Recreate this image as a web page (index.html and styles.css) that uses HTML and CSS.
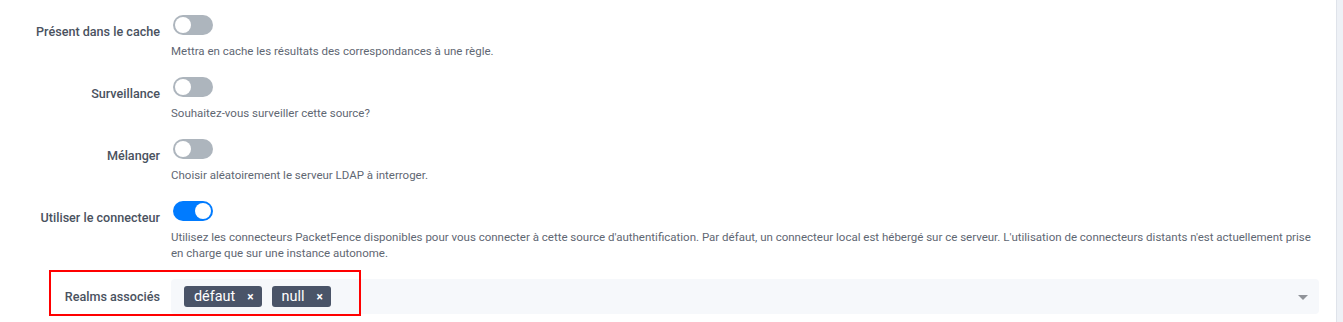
FILE: index.html
```html
<!DOCTYPE html>
<html lang="fr">
<head>
<meta charset="utf-8">
<title>Source</title>
<link rel="stylesheet" href="styles.css">
</head>
<body>
<div class="page">
  <main class="form">
    <div class="row">
      <label class="label">Présent dans le cache</label>
      <div class="control">
        <span class="switch"><span class="knob"></span></span>
        <div class="help">Mettra en cache les résultats des correspondances à une règle.</div>
      </div>
    </div>
    <div class="row">
      <label class="label">Surveillance</label>
      <div class="control">
        <span class="switch"><span class="knob"></span></span>
        <div class="help">Souhaitez-vous surveiller cette source?</div>
      </div>
    </div>
    <div class="row">
      <label class="label">Mélanger</label>
      <div class="control">
        <span class="switch"><span class="knob"></span></span>
        <div class="help">Choisir aléatoirement le serveur LDAP à interroger.</div>
      </div>
    </div>
    <div class="row">
      <label class="label">Utiliser le connecteur</label>
      <div class="control">
        <span class="switch on"><span class="knob"></span></span>
        <div class="help">Utilisez les connecteurs PacketFence disponibles pour vous connecter à cette source d'authentification. Par défaut, un connecteur local est hébergé sur ce serveur. L'utilisation de connecteurs distants n'est actuellement prise en charge que sur une instance autonome.</div>
      </div>
    </div>
    <div class="row realms">
      <label class="label label-mid">Realms associés</label>
      <div class="select">
        <div class="tags">
          <span class="tag">défaut<span class="x">×</span></span>
          <span class="tag">null<span class="x">×</span></span>
        </div>
        <span class="caret"></span>
      </div>
      <span class="highlight"></span>
    </div>
  </main>
  <aside class="side"></aside>
</div>
</body>
</html>
```
FILE: styles.css
```css
html, body {
  margin: 0;
  padding: 0;
  background: #fff;
}
body {
  font-family: Roboto, "Liberation Sans", sans-serif;
  color: #495057;
}
.page {
  display: flex;
  height: 322px;
  overflow: hidden;
}
.form {
  flex: 1;
  padding: 15px 17px 0 0;
}
.side {
  width: 6px;
  border-left: 1px solid #dfe3ea;
  background: #eef1f6;
}
.row {
  display: grid;
  grid-template-columns: 171px 1fr;
  margin-bottom: 18px;
  position: relative;
}
.label {
  text-align: right;
  padding: 9px 11px 0 0;
  font-size: 12.6px;
  line-height: 16px;
  font-weight: 500;
  color: #4a5260;
}
.control {
  padding-left: 2px;
}
.switch {
  display: flex;
  align-items: center;
  width: 40px;
  height: 20px;
  border-radius: 10px;
  background: #adb5bd;
  box-sizing: border-box;
  padding: 0 2px;
}
.switch .knob {
  width: 16px;
  height: 16px;
  border-radius: 50%;
  background: #fff;
}
.switch.on {
  background: #007bff;
  justify-content: flex-end;
}
.help {
  margin-top: 8px;
  margin-left: -2px;
  font-size: 11.5px;
  line-height: 16px;
  color: #5f6773;
}
.label-mid {
  padding-top: 0;
  align-self: center;
}
.select {
  display: flex;
  align-items: center;
  height: 35px;
  background: #f6f8fb;
  border-radius: 4px;
  padding: 0 11px 0 13px;
}
.tags {
  flex: 1;
  display: flex;
  gap: 10px;
}
.tag {
  display: inline-flex;
  align-items: center;
  height: 21px;
  padding: 0 8px 0 10px;
  border-radius: 3px;
  background: #4a5468;
  color: #fff;
  font-size: 14.4px;
}
.tag .x {
  margin-left: 12px;
  font-size: 12px;
  font-weight: 700;
}
.caret {
  width: 0;
  height: 0;
  border-left: 5px solid transparent;
  border-right: 5px solid transparent;
  border-top: 5px solid #909399;
  margin-top: 2px;
}
.highlight {
  position: absolute;
  left: 49px;
  top: -9px;
  width: 312px;
  height: 46px;
  box-sizing: border-box;
  border: 2px solid #f00;
  pointer-events: none;
}
```
